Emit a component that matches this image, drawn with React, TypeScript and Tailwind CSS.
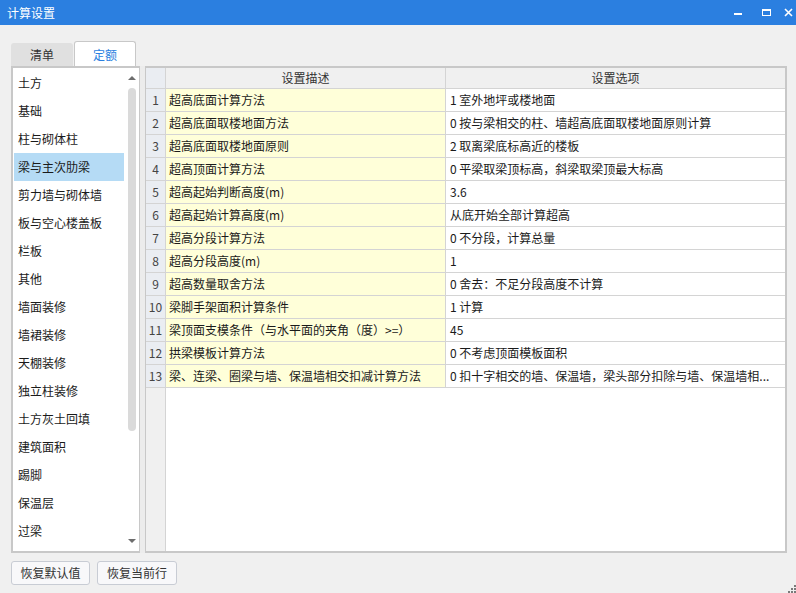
import React from 'react';

const categories = [
  '土方', '基础', '柱与砌体柱', '梁与主次肋梁', '剪力墙与砌体墙', '板与空心楼盖板', '栏板', '其他',
  '墙面装修', '墙裙装修', '天棚装修', '独立柱装修', '土方灰土回填', '建筑面积', '踢脚', '保温层', '过梁',
];

const rows = [
  { desc: '超高底面计算方法', option: '1 室外地坪或楼地面' },
  { desc: '超高底面取楼地面方法', option: '0 按与梁相交的柱、墙超高底面取楼地面原则计算' },
  { desc: '超高底面取楼地面原则', option: '2 取离梁底标高近的楼板' },
  { desc: '超高顶面计算方法', option: '0 平梁取梁顶标高，斜梁取梁顶最大标高' },
  { desc: '超高起始判断高度(m)', option: '3.6' },
  { desc: '超高起始计算高度(m)', option: '从底开始全部计算超高' },
  { desc: '超高分段计算方法', option: '0 不分段，计算总量' },
  { desc: '超高分段高度(m)', option: '1' },
  { desc: '超高数量取舍方法', option: '0 舍去：不足分段高度不计算' },
  { desc: '梁脚手架面积计算条件', option: '1 计算' },
  { desc: '梁顶面支模条件（与水平面的夹角（度）>=）', option: '45' },
  { desc: '拱梁模板计算方法', option: '0 不考虑顶面模板面积' },
  { desc: '梁、连梁、圈梁与墙、保温墙相交扣减计算方法', option: '0 扣十字相交的墙、保温墙，梁头部分扣除与墙、保温墙相...' },
];

const TitleBar = () => (
  <div className="h-[25px] bg-[#2b7fe0] flex items-center justify-between pl-[7px] text-white shrink-0">
    <span className="text-[12px] leading-none">计算设置</span>
    <div className="flex items-center h-full">
      {/* minimize */}
      <div className="w-[28px] h-full flex items-center justify-center">
        <div className="w-[8px] h-[2px] bg-white mt-[2px]" />
      </div>
      {/* maximize */}
      <div className="w-[28px] h-full flex items-center justify-center">
        <div className="w-[9px] h-[7px] border border-white border-t-2" />
      </div>
      {/* close */}
      <div className="w-[16px] h-full flex items-center justify-center">
        <svg width="9" height="9" viewBox="0 0 9 9">
          <path d="M1 1 L8 8 M8 1 L1 8" stroke="white" strokeWidth="1.6" />
        </svg>
      </div>
    </div>
  </div>
);

const CategoryList = () => (
  <div className="w-[129px] bg-white border-2 border-[#c8c8c8] border-r-[1px] flex relative">
    <ul className="flex-1 pt-[1px] pl-[1px]">
      {categories.map((c, i) => (
        <li
          key={c}
          className={`h-[28px] flex items-center pl-[4px] text-[12px] text-[#1a1a1a] w-[110px] ${
            i === 3 ? 'bg-[#b5dbf5]' : ''
          }`}
        >
          {c}
        </li>
      ))}
    </ul>
    {/* scrollbar */}
    <div className="w-[10px] mr-[2px] flex flex-col items-center">
      <div className="h-[20px] flex items-center justify-center">
        <div className="w-0 h-0 border-l-[4px] border-r-[4px] border-b-[4px] border-l-transparent border-r-transparent border-b-[#6d6d6d]" />
      </div>
      <div className="w-[8px] h-[343px] rounded-full bg-[#dadada]" />
      <div className="flex-1" />
      <div className="h-[20px] flex items-center justify-center">
        <div className="w-0 h-0 border-l-[4px] border-r-[4px] border-t-[4px] border-l-transparent border-r-transparent border-t-[#6d6d6d]" />
      </div>
    </div>
  </div>
);

const SettingsTable = () => (
  <div className="flex-1 border-2 border-[#c8c8c8] border-l-[1px] bg-white flex flex-col overflow-hidden">
    <div className="flex h-[21px] bg-[#f0f0f0] border-b border-[#d4d4d4] text-[12px] text-[#333]">
      <div className="w-[20px] bg-[#eaedf2] border-r border-[#d4d4d4]" />
      <div className="w-[280px] border-r border-[#d4d4d4] flex items-center justify-center">设置描述</div>
      <div className="flex-1 flex items-center justify-center">设置选项</div>
    </div>
    {rows.map((r, i) => (
      <div key={i} className="flex h-[23px] border-b border-[#d4d4d4] text-[12px] text-[#1a1a1a]">
        <div className="w-[20px] bg-[#eaedf2] border-r border-[#d4d4d4] flex items-center justify-center text-[#444]">
          {i + 1}
        </div>
        <div className="w-[280px] bg-[#ffffd9] border-r border-[#d4d4d4] flex items-center pl-[3px] whitespace-nowrap overflow-hidden">
          {r.desc}
        </div>
        <div className="flex-1 min-w-0 flex items-center pl-[4px] whitespace-nowrap">
          {r.option}
        </div>
      </div>
    ))}
    <div className="flex-1 flex">
      <div className="w-[20px] bg-[#f0f0f0] border-r border-[#d4d4d4]" />
      <div className="flex-1" />
    </div>
  </div>
);

export default function App() {
  return (
    <div
      className="w-[796px] h-[593px] bg-[#f0f0f0] flex flex-col overflow-hidden relative"
      style={{ fontFamily: '"Microsoft YaHei", "Noto Sans CJK SC", sans-serif' }}
    >
      <TitleBar />
      <div className="flex-1 flex flex-col pl-[11px] pr-[9px] pt-[15px]">
        {/* tabs */}
        <div className="flex items-end h-[26px] text-[12px]">
          <div className="w-[62px] h-[23px] bg-[#e0e0e0] rounded-t-[3px] flex items-center justify-center text-[#333]">
            清单
          </div>
          <div className="w-[62px] h-[26px] ml-[1px] bg-white border border-b-0 border-[#c8c8c8] rounded-t-[3px] flex items-center justify-center text-[#2b7fe0] relative top-[1px]">
            定额
          </div>
        </div>
        {/* main */}
        <div className="flex h-[487px]">
          <CategoryList />
          <div className="w-[5px] bg-[#ececec]" />
          <SettingsTable />
        </div>
        {/* buttons */}
        <div className="flex gap-[7px] mt-[8px] text-[12px] text-[#333]">
          <button className="w-[79px] h-[24px] border border-[#c8ccd4] rounded-[3px] bg-[#f8f8fa]">恢复默认值</button>
          <button className="w-[80px] h-[24px] border border-[#c8ccd4] rounded-[3px] bg-[#f8f8fa]">恢复当前行</button>
        </div>
      </div>
      {/* resize grip */}
      <svg className="absolute right-0 bottom-0" width="9" height="9" viewBox="0 0 9 9">
        <rect x="7" y="1" width="2" height="2" fill="#7a7a7a" />
        <rect x="4" y="4" width="2" height="2" fill="#7a7a7a" />
        <rect x="7" y="4" width="2" height="2" fill="#7a7a7a" />
        <rect x="1" y="7" width="2" height="2" fill="#7a7a7a" />
        <rect x="4" y="7" width="2" height="2" fill="#7a7a7a" />
        <rect x="7" y="7" width="2" height="2" fill="#7a7a7a" />
      </svg>
    </div>
  );
}
